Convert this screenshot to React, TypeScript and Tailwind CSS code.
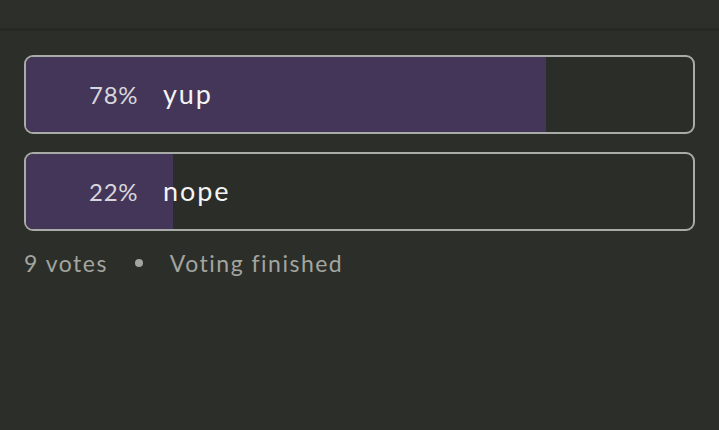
import React from "react";

const options = [
  { pct: 78, label: "yup" },
  { pct: 22, label: "nope" },
];

export default function App() {
  return (
    <div
      className="w-[719px] h-[430px] bg-[#2c2e29] overflow-hidden"
      style={{ fontFamily: "Lato, 'Open Sans', sans-serif" }}
    >
      <div className="h-[31px] bg-[#2d2f2a] border-b-[3px] border-[#272924]" />
      <div className="px-[24px] pt-[24px] flex flex-col gap-[18px]">
        {options.map((o) => (
          <div
            key={o.label}
            className="relative h-[79px] rounded-[9px] border-2 border-[#a9aba6] overflow-hidden bg-[#2b2d28]"
          >
            <div
              className="absolute left-0 top-0 bottom-0 bg-[#433659]"
              style={{ width: `${o.pct}%` }}
            />
            <div className="relative h-full flex items-center">
              <span className="w-[112px] text-right text-[24px] text-[#d8d6dc] tracking-[0.6px]">
                {o.pct}%
              </span>
              <span className="ml-[25px] text-[27px] text-[#f4f4f4] tracking-[1.9px]">{o.label}</span>
            </div>
          </div>
        ))}
        <div className="flex items-center text-[23px] text-[#a3a5a0] -mt-[3px] tracking-[1.5px]">
          <span>9 votes</span>
          <span className="ml-[27px] mr-[27px] w-[8px] h-[8px] rounded-full bg-[#a3a5a0]" />
          <span>Voting finished</span>
        </div>
      </div>
    </div>
  );
}
